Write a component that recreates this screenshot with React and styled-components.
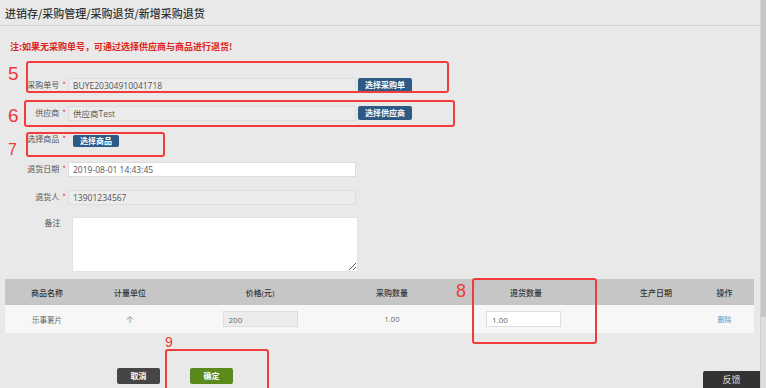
import React from "react";
import styled, { createGlobalStyle } from "styled-components";

const GlobalStyle = createGlobalStyle`
  html, body { margin: 0; padding: 0; }
  body {
    background: #e9e9e9;
    overflow: hidden;
    font-family: "Noto Sans CJK SC", "Noto Sans", sans-serif;
    color: #444;
  }
  * { box-sizing: border-box; }
`;

const Page = styled.div`
  position: relative;
  width: 760px;
  height: 388px;
`;

const Header = styled.div`
  height: 26px;
  display: flex;
  align-items: center;
  padding-left: 5px;
  font-size: 11px;
  color: #333;
  font-weight: 500;
  border-bottom: 1px solid #d5d5d5;
`;

const Note = styled.div`
  margin-top: 15px;
  padding-left: 10px;
  height: 12px;
  line-height: 12px;
  font-size: 9px;
  font-weight: 700;
  color: #e02222;
`;

const Form = styled.div`
  margin-top: 18px;
  display: flex;
  flex-direction: column;
`;

const Row = styled.div`
  display: grid;
  grid-template-columns: 66px auto auto;
  justify-content: start;
  align-items: ${(p) => (p.$top ? "start" : "center")};
  height: ${(p) => p.$h || 28}px;
  padding-top: ${(p) => p.$pt || 0}px;
`;

const Label = styled.div`
  text-align: right;
  font-size: 8px;
  color: #555;
  line-height: 12px;
  padding-bottom: ${(p) => p.$pb || 0}px;
`;

const Star = styled.span`
  color: #e03030;
  margin-left: 3px;
`;

const Field = styled.input`
  width: 288px;
  height: 15px;
  margin-left: 2px;
  border: 1px solid #dddddd;
  background: ${(p) => (p.$white ? "#ffffff" : "#ececec")};
  font-family: "Open Sans", "Noto Sans CJK SC", sans-serif;
  font-size: 8.5px;
  color: #555;
  padding: 0 0 0 4px;
  outline: none;
`;

const Btn = styled.button`
  height: ${(p) => p.$hgt || 14}px;
  margin-left: ${(p) => p.$ml || 2}px;
  padding: 0 ${(p) => p.$px || 6}px;
  border: none;
  border-radius: 2px;
  background: #2d5a84;
  color: #fff;
  font-family: "Noto Sans CJK SC", sans-serif;
  font-size: 8px;
  font-weight: 700;
  line-height: 1;
`;

const Memo = styled.textarea`
  width: 286px;
  height: 55px;
  margin-left: 6px;
  border: 1px solid #e2e2e2;
  background: #fff;
  outline: none;
`;

const Table = styled.div`
  margin: 7px 0 0 5px;
  width: 749px;
`;

const TRow = styled.div`
  display: grid;
  grid-template-columns: 84px 82px 178px 86px 182px 78px 59px;
  align-items: center;
  height: ${(p) => (p.$head ? 26 : 28)}px;
  background: ${(p) => (p.$head ? "#c6c6c6" : "#f7f7f7")};
  font-size: ${(p) => (p.$head ? 8 : 7.5)}px;
  color: ${(p) => (p.$head ? "#333" : "#666")};
  font-weight: ${(p) => (p.$head ? 500 : 400)};
`;

const Cell = styled.div`
  display: flex;
  justify-content: center;
  align-items: center;
  font-family: "Open Sans", "Noto Sans CJK SC", sans-serif;
`;

const CellInput = styled.input`
  width: 75px;
  height: 16px;
  border: 1px solid #dedede;
  background: ${(p) => (p.$white ? "#fff" : "#ececec")};
  font-family: "Open Sans", sans-serif;
  font-size: 8px;
  color: #666;
  padding: 0 0 0 5px;
  outline: none;
  margin-right: ${(p) => p.$mr || 0}px;
`;

const Link = styled.span`
  color: #4a9bc9;
  font-size: 7px;
  font-family: "Noto Sans CJK SC", sans-serif;
`;

const Actions = styled.div`
  margin-top: 35px;
  padding-left: 117px;
  display: flex;
  gap: 30px;
`;

const ActionBtn = styled.button`
  width: 43px;
  height: 16px;
  border: none;
  border-radius: 2px;
  background: ${(p) => p.$bg};
  color: #fff;
  font-family: "Noto Sans CJK SC", sans-serif;
  font-size: 8px;
  font-weight: 700;
  line-height: 1;
`;

const Annot = styled.div`
  position: absolute;
  left: ${(p) => p.$x}px;
  top: ${(p) => p.$y}px;
  width: ${(p) => p.$w}px;
  height: ${(p) => p.$h}px;
  border: 2px solid #f23c3c;
  border-radius: 3px;
  pointer-events: none;
`;

const AnnotNum = styled.div`
  position: absolute;
  left: ${(p) => p.$x}px;
  top: ${(p) => p.$y}px;
  font-family: "Liberation Sans", Arial, sans-serif;
  font-size: ${(p) => p.$s}px;
  line-height: 1;
  color: #ea3a3a;
`;

const Feedback = styled.div`
  position: fixed;
  right: 6px;
  bottom: 0;
  width: 57px;
  height: 17px;
  background: #333;
  color: #ddd;
  font-size: 9px;
  display: flex;
  align-items: center;
  justify-content: center;
  border-top-left-radius: 2px;
`;

const Scrollbar = styled.div`
  position: fixed;
  top: 0;
  right: 0;
  width: 6px;
  height: 388px;
  background: linear-gradient(to bottom, #c6c6c6 0, #c6c6c6 317px, #dedede 317px);
  border-left: 1px solid #d2d2d2;
`;

export default function App() {
  return (
    <>
      <GlobalStyle />
      <Page>
        <Header>进销存/采购管理/采购退货/新增采购退货</Header>
        <Note>注:如果无采购单号，可通过选择供应商与商品进行退货!</Note>
        <Form>
          <Row>
            <Label>采购单号<Star>*</Star></Label>
            <Field readOnly value="BUYE20304910041718" />
            <Btn $px={7}>选择采购单</Btn>
          </Row>
          <Row>
            <Label>供应商<Star>*</Star></Label>
            <Field readOnly value="供应商Test" />
            <Btn $px={7}>选择供应商</Btn>
          </Row>
          <Row>
            <Label $pb={4}>选择商品<Star>*</Star></Label>
            <Btn $ml={7} $hgt={12} $px={7}>选择商品</Btn>
          </Row>
          <Row>
            <Label>退货日期<Star>*</Star></Label>
            <Field $white readOnly value="2019-08-01 14:43:45" />
          </Row>
          <Row>
            <Label>退货人<Star>*</Star></Label>
            <Field readOnly value="13901234567" />
          </Row>
          <Row $top $h={61} $pt={6}>
            <Label>备注&nbsp;&nbsp;&nbsp;</Label>
            <Memo />
          </Row>
        </Form>
        <Table>
          <TRow $head>
            <Cell>商品名称</Cell>
            <Cell>计量单位</Cell>
            <Cell>价格(元)</Cell>
            <Cell>采购数量</Cell>
            <Cell>退货数量</Cell>
            <Cell>生产日期</Cell>
            <Cell>操作</Cell>
          </TRow>
          <TRow>
            <Cell>乐事薯片</Cell>
            <Cell>个</Cell>
            <Cell><CellInput readOnly value="200" /></Cell>
            <Cell>1.00</Cell>
            <Cell><CellInput $white $mr={5} readOnly value="1.00" /></Cell>
            <Cell />
            <Cell><Link>删除</Link></Cell>
          </TRow>
        </Table>
        <Actions>
          <ActionBtn $bg="#454545">取消</ActionBtn>
          <ActionBtn $bg="#5a8a1c">确定</ActionBtn>
        </Actions>

        <Annot $x={26} $y={61} $w={423} $h={32} />
        <AnnotNum $x={8} $y={64} $s={19}>5</AnnotNum>
        <Annot $x={24} $y={100} $w={431} $h={27} />
        <AnnotNum $x={8} $y={106} $s={19}>6</AnnotNum>
        <Annot $x={26} $y={132} $w={139} $h={25} />
        <AnnotNum $x={8} $y={142} $s={16}>7</AnnotNum>
        <Annot $x={472} $y={278} $w={125} $h={66} />
        <AnnotNum $x={456} $y={282} $s={18}>8</AnnotNum>
        <Annot $x={165} $y={349} $w={104} $h={42} />
        <AnnotNum $x={165} $y={335} $s={14}>9</AnnotNum>
      </Page>
      <Feedback>反馈</Feedback>
      <Scrollbar />
    </>
  );
}
